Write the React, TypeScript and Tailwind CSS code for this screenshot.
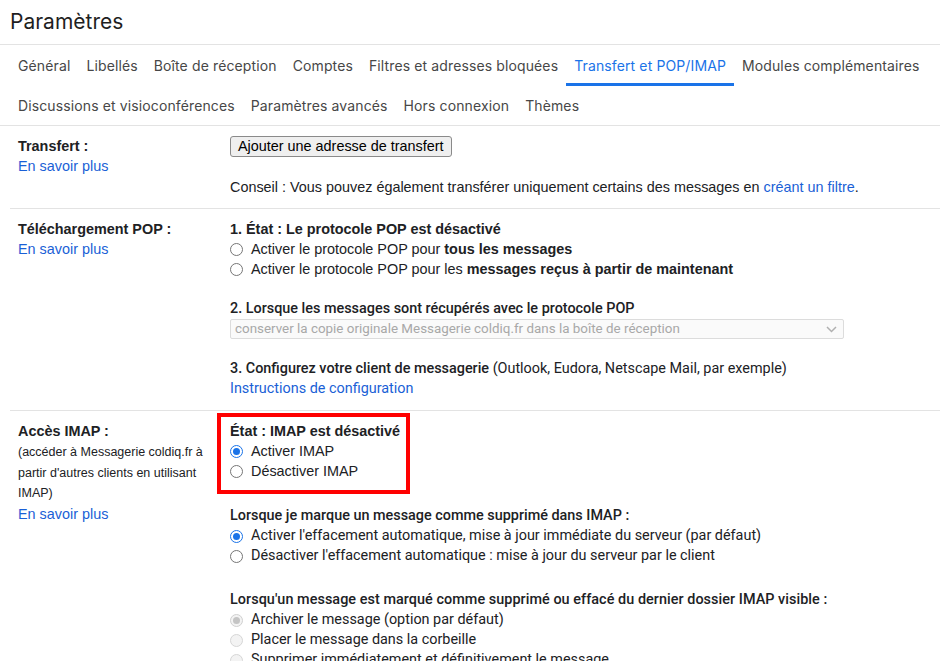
import { ReactNode } from "react";

const arial = "font-['Liberation_Sans',Arial,sans-serif]";
const roboto = "font-['Roboto','Liberation_Sans',sans-serif]";

const tabsRow1 = [
  "Général",
  "Libellés",
  "Boîte de réception",
  "Comptes",
  "Filtres et adresses bloquées",
  "Transfert et POP/IMAP",
  "Modules complémentaires",
];
const tabsRow2 = [
  "Discussions et visioconférences",
  "Paramètres avancés",
  "Hors connexion",
  "Thèmes",
];

type RadioState = "off" | "on" | "disabled" | "disabledOn";

function Radio({ state }: { state: RadioState }) {
  if (state === "on") {
    return (
      <span className="flex h-[13px] w-[13px] shrink-0 items-center justify-center rounded-full border border-[#1a73e8] bg-white">
        <span className="h-[7px] w-[7px] rounded-full bg-[#1a73e8]" />
      </span>
    );
  }
  if (state === "disabledOn") {
    return (
      <span className="flex h-[13px] w-[13px] shrink-0 items-center justify-center rounded-full border border-[#d0d0d0] bg-[#f3f3f3]">
        <span className="h-[7px] w-[7px] rounded-full bg-[#c4c4c4]" />
      </span>
    );
  }
  if (state === "disabled") {
    return (
      <span className="h-[13px] w-[13px] shrink-0 rounded-full border border-[#d6d6d6] bg-[#f3f3f3]" />
    );
  }
  return (
    <span className="h-[13px] w-[13px] shrink-0 rounded-full border border-[#767676] bg-white" />
  );
}

function Option({
  state = "off",
  children,
}: {
  state?: RadioState;
  children: ReactNode;
}) {
  return (
    <div className="flex h-5 items-center gap-2">
      <Radio state={state} />
      <span className="whitespace-nowrap">{children}</span>
    </div>
  );
}

function Link({ children, className = "" }: { children: ReactNode; className?: string }) {
  return <a className={`text-[#1a5fd6] ${className}`}>{children}</a>;
}

function Section({
  label,
  children,
  last = false,
}: {
  label: ReactNode;
  children: ReactNode;
  last?: boolean;
}) {
  return (
    <div
      className={`flex pl-2 pt-[10px] pb-[11px] ${last ? "" : "border-b border-[#e3e3e3]"}`}
    >
      <div className={`w-[212px] shrink-0 ${arial} text-[14.4px] leading-5`}>{label}</div>
      <div className="min-w-0 flex-1 text-[14.4px] leading-5">{children}</div>
    </div>
  );
}

export default function App() {
  return (
    <div className="h-[661px] w-[940px] overflow-hidden bg-white text-[#202124]">
      <div className="flex h-[45px] items-center border-b border-[#e3e3e3] pl-[10px] font-['Inter',sans-serif] text-[21px] text-[#1f1f1f]">
        Paramètres
      </div>
      <div className="pl-[10px] font-['Inter',sans-serif] text-[14px] tracking-[0.12px] text-[#474747]">
        <div className="flex h-[41px]">
          {tabsRow1.map((t) =>
            t === "Transfert et POP/IMAP" ? (
              <div
                key={t}
                className="flex items-center whitespace-nowrap border-b-[3px] border-[#1a73e8] px-2 pt-[3px] text-[#1a73e8]"
              >
                {t}
              </div>
            ) : (
              <div key={t} className="flex items-center whitespace-nowrap px-2">
                {t}
              </div>
            ),
          )}
        </div>
        <div className="-ml-[10px] flex h-[40px] border-b border-[#e3e3e3] pl-[10px]">
          {tabsRow2.map((t) => (
            <div key={t} className="flex items-center whitespace-nowrap px-2">
              {t}
            </div>
          ))}
        </div>
      </div>

      <div className="pl-[10px]">
        <Section
          label={
            <>
              <div className="font-bold">Transfert :</div>
              <Link>En savoir plus</Link>
            </>
          }
        >
          <div className={arial}>
            <button className="h-[21px] rounded-[3px] border border-[#8a8a8a] bg-[#efefef] px-[7px] text-[14.4px] leading-[19px] text-black">
              Ajouter une adresse de transfert
            </button>
            <div className="mt-5 whitespace-nowrap">
              Conseil : Vous pouvez également transférer uniquement certains des messages en{" "}
              <Link>créant un filtre</Link>.
            </div>
          </div>
        </Section>

        <Section
          label={
            <>
              <div className="font-bold">Téléchargement POP :</div>
              <Link>En savoir plus</Link>
            </>
          }
        >
          <div className={arial}>
            <div className="font-bold">1. État : Le protocole POP est désactivé</div>
            <Option>
              Activer le protocole POP pour <b>tous les messages</b>
            </Option>
            <Option>
              Activer le protocole POP pour les <b>messages reçus à partir de maintenant</b>
            </Option>
          </div>
          <div className={`${roboto} mt-5`}>
            <div className="font-medium">2. Lorsque les messages sont récupérés avec le protocole POP</div>
            <div className="flex h-5 w-[614px] items-center justify-between rounded-[2px] border border-[#dcdcdc] bg-[#fafafa] pl-[4px] pr-[6px] text-[13.4px] text-[#a8a8a8]">
              <span>conserver la copie originale Messagerie coldiq.fr dans la boîte de réception</span>
              <svg width="11" height="7" viewBox="0 0 11 7" fill="none">
                <path d="M1 1l4.5 4.5L10 1" stroke="#b0b0b0" strokeWidth="1.5" />
              </svg>
            </div>
            <div className="mt-5 whitespace-nowrap">
              <span className="font-medium">3. Configurez votre client de messagerie</span> (Outlook,
              Eudora, Netscape Mail, par exemple)
            </div>
            <Link>Instructions de configuration</Link>
          </div>
        </Section>

        <Section
          last
          label={
            <>
              <div className="font-bold">Accès IMAP :</div>
              <div className="mt-[1px] text-[12.5px] leading-[20.5px]">
                (accéder à Messagerie coldiq.fr à
                <br />
                partir d'autres clients en utilisant
                <br />
                IMAP)
              </div>
              <Link className="block">En savoir plus</Link>
            </>
          }
        >
          <div
            className={`${arial} -mt-[8px] -ml-[13px] w-[193px] border-4 border-[#ff0000] pl-[9px] pt-1 pb-[9px]`}
          >
            <div className="font-bold">État : IMAP est désactivé</div>
            <Option state="on">Activer IMAP</Option>
            <Option>Désactiver IMAP</Option>
          </div>
          <div className={`${roboto} mt-[12px]`}>
            <div className="font-medium">Lorsque je marque un message comme supprimé dans IMAP :</div>
            <Option state="on">
              Activer l'effacement automatique, mise à jour immédiate du serveur (par défaut)
            </Option>
            <Option>Désactiver l'effacement automatique : mise à jour du serveur par le client</Option>
            <div className="mt-6 font-medium tracking-[0.05px]">
              Lorsqu'un message est marqué comme supprimé ou effacé du dernier dossier IMAP visible :
            </div>
            <Option state="disabledOn">Archiver le message (option par défaut)</Option>
            <Option state="disabled">Placer le message dans la corbeille</Option>
            <Option state="disabled">Supprimer immédiatement et définitivement le message</Option>
          </div>
        </Section>
      </div>
    </div>
  );
}
